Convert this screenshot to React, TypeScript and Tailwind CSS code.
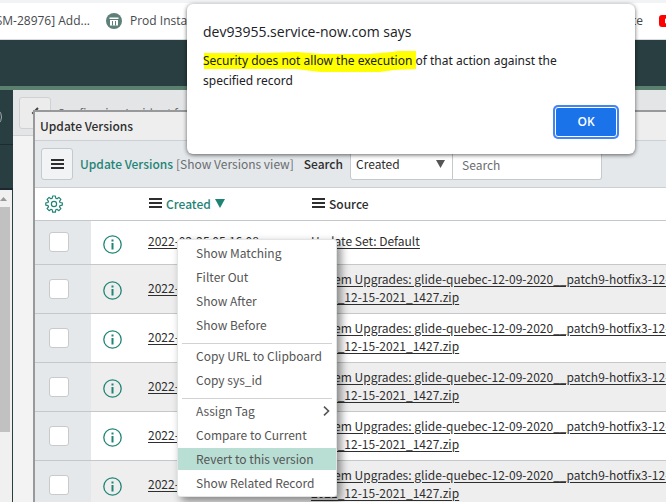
import { useState } from "react";

interface IVersion {
	created: string;
	source: string[];
}

const upgrade = [
	"System Upgrades: glide-quebec-12-09-2020__patch9-hotfix3-12-14-",
	"2021_12-15-2021_1427.zip",
];

const versions: IVersion[] = [
	{ created: "2022-02-25 05:16:08", source: ["Update Set: Default"] },
	{ created: "2022-01-25 04:12:31", source: upgrade },
	{ created: "2022-01-25 04:12:30", source: upgrade },
	{ created: "2022-01-25 04:12:29", source: upgrade },
	{ created: "2022-01-25 04:12:28", source: upgrade },
	{ created: "2022-01-25 04:12:27", source: upgrade },
];

const menuGroups = [
	["Show Matching", "Filter Out", "Show After", "Show Before"],
	["Copy URL to Clipboard", "Copy sys_id"],
	["Assign Tag", "Compare to Current", "Revert to this version", "Show Related Record"],
];

function BarsIcon() {
	return (
		<svg width="13" height="11" viewBox="0 0 13 11" fill="#2e2e2e" aria-hidden="true">
			<path d="M0 0h13v2H0zM0 4h13v2H0zM0 8h13v2H0z" />
		</svg>
	);
}

function GearIcon() {
	return (
		<svg width="18" height="18" viewBox="0 0 18 18" fill="none" stroke="#1f8476" strokeWidth="1.2" aria-hidden="true">
			<path
				strokeLinejoin="round"
				d="M7.6 1h2.8l.4 2.3 1.2.5 1.9-1.4 2 2-1.4 1.9.5 1.2 2.3.4v2.2l-2.3.5-.5 1.2 1.4 1.9-2 2-1.9-1.4-1.2.5-.4 2.3H7.6l-.4-2.3-1.2-.5-1.9 1.4-2-2 1.4-1.9-.5-1.2L.8 10.1V7.9L3 7.500l.5-1.2-1.4-1.9 2-2L6 3.8l1.2-.5z"
			/>
			<circle cx="9" cy="9" r="2.6" />
		</svg>
	);
}

function InfoIcon() {
	return (
		<svg width="19" height="19" viewBox="0 0 19 19" fill="none" aria-hidden="true">
			<circle cx="9.5" cy="9.5" r="8.7" stroke="#1f8476" strokeWidth="1.3" />
			<path d="M8.5 4.500h2v2h-2zM8.500 8h2v6.500h-2z" fill="#1f8476" />
		</svg>
	);
}

function BookmarksBar() {
	return (
		<nav className="flex h-10 items-center overflow-hidden whitespace-nowrap border-b border-t-[3px] border-b-[#d9dbde] border-t-[#f1f3f4] bg-white font-['Open_Sans',sans-serif] text-xs text-[#45484c]">
			<a href="#issue" className="flex w-[106px] shrink-0 justify-end pr-4">
				SM-28976] Add...
			</a>
			<a href="#prod" className="flex shrink-0 items-center gap-2">
				<svg width="16" height="16" viewBox="0 0 16 16" aria-hidden="true">
					<circle cx="8" cy="8" r="8" fill="#5f8078" />
					<path d="M3.500 4.500h9v1.500h-9zM4 7h8v5.500H4z" fill="#fff" />
					<path d="M6.500 8v4.500M9.500 8v4.500" stroke="#5f8078" />
				</svg>
				Prod Instance
			</a>
			<span className="grow" />
			<a href="#instance" className="shrink-0 pr-4">
				Instance
			</a>
			<a href="#video" aria-label="Video" className="w-[7px] shrink-0 overflow-hidden">
				<svg width="16" height="12" viewBox="0 0 16 12" aria-hidden="true">
					<rect width="16" height="12" rx="3" fill="#f00" />
					<path d="M6 3.500v5L11 6z" fill="#fff" />
				</svg>
			</a>
		</nav>
	);
}

function Sidebar() {
	return (
		<aside className="flex w-[13px] shrink-0 flex-col overflow-hidden bg-[#293e40]">
			<div className="flex h-[55px] items-center justify-end border-b border-[#1c2b2d] pr-[11px]">
				<span className="size-5 shrink-0 rounded-full border border-[#a5adae]" />
			</div>
			<div className="h-[45px] shrink-0 border-b-2 border-[#1c2830]" />
			<div className="mr-px flex grow flex-col bg-[#f0f0f0]">
				<svg width="10" height="17" viewBox="0 0 10 17" aria-hidden="true">
					<path d="M0 11l3.500-4 3.500 4z" fill="#999" />
				</svg>
				<div className="mr-0.5 h-[225px] bg-[#c1c1c1]" />
			</div>
		</aside>
	);
}

function VersionRow({ version, index }: { version: IVersion; index: number }) {
	return (
		<tr className="border-b border-[#c5c8ca] odd:bg-white even:bg-[#eee]">
			<td className="w-14 bg-[#e4e8eb] pl-3.5">
				<input
					type="checkbox"
					aria-label={`Select record ${index + 1}`}
					className="block size-5 appearance-none rounded-[3px] border border-[#c8cacc] bg-white checked:bg-[#1f8476]"
				/>
			</td>
			<td className="w-[57px] pl-3">
				<button type="button" aria-label="Preview record" className="mt-1 block">
					<InfoIcon />
				</button>
			</td>
			<td className="w-[163px] pb-0.5">
				<a href="#record" className="underline underline-offset-2">
					{version.created}
				</a>
			</td>
			<td className="h-11 pt-[5px] pb-[7px]">
				<a href="#source" className="underline underline-offset-2">
					{version.source.map((line) => (
						<span key={line} className="block underline">
							{line}
						</span>
					))}
				</a>
			</td>
		</tr>
	);
}

function VersionsDialog() {
	return (
		<section className="absolute inset-x-0 top-5 bottom-0 ml-5 overflow-hidden border-t-2 border-l-2 border-[#97999b] bg-white">
			<h2 className="flex h-7 items-center bg-[#eee] pl-[5px] font-medium">Update Versions</h2>
			<div className="flex h-12 items-center whitespace-nowrap border-y border-[#cbd0d4] bg-[#e4e8eb] pl-1.5">
				<button
					type="button"
					aria-label="List actions"
					className="flex size-8 shrink-0 items-center justify-center rounded-[3px] border border-[#c4c9cd] bg-[#f1f3f4]"
				>
					<BarsIcon />
				</button>
				<span className="ml-[7px] font-medium text-[#1f8476]">Update Versions</span>
				<span className="ml-[3px] text-[#6a6d70]">[Show Versions view]</span>
				<label htmlFor="field" className="ml-2.5 font-medium">
					Search
				</label>
				<div className="relative ml-[7px] shrink-0">
					<select
						id="field"
						className="block h-8 w-[103px] appearance-none rounded-l-[3px] border border-[#c4c9cd] bg-white pl-[5px]"
					>
						<option>Created</option>
						<option>Source</option>
					</select>
					<svg width="9" height="8" viewBox="0 0 9 8" className="pointer-events-none absolute right-2 top-3" aria-hidden="true">
						<path d="M0 0h9L4.500 8z" fill="#555" />
					</svg>
				</div>
				<input
					type="text"
					aria-label="Search text"
					placeholder="Search"
					className="h-8 w-[149px] rounded-r-[3px] border border-l-0 border-[#c4c9cd] bg-white pl-[9px] placeholder:text-[#6a6d70]"
				/>
			</div>
			<table className="w-full table-fixed border-collapse whitespace-nowrap text-left leading-[18px]">
				<thead>
					<tr className="h-8 border-b border-[#c5c8ca]">
						<th className="w-14 pl-2.5">
							<button type="button" aria-label="Personalize list" className="block">
								<GearIcon />
							</button>
						</th>
						<th className="w-[57px]" />
						<th className="w-[163px] pl-px font-medium text-[#1f8476]">
							<span className="flex items-center gap-1">
								<BarsIcon />
								Created
								<svg width="10" height="9" viewBox="0 0 10 9" aria-hidden="true">
									<path d="M0 0h10L5 9z" fill="#1f8476" />
								</svg>
							</span>
						</th>
						<th className="pl-px font-medium">
							<span className="flex items-center gap-1">
								<BarsIcon />
								Source
							</span>
						</th>
					</tr>
				</thead>
				<tbody>
					{versions.map((version, index) => (
						<VersionRow key={index} version={version} index={index} />
					))}
				</tbody>
			</table>
		</section>
	);
}

function ContextMenu() {
	const [active, setActive] = useState("Revert to this version");

	return (
		<div className="absolute left-[177px] top-[239px] w-40 rounded-[3px] border border-[#e2e4e5] bg-white py-0.5 text-[#555] shadow-[4px_4px_8px_rgba(0,0,0,0.45)]">
			{menuGroups.map((group, index) => (
				<div key={index}>
					{index > 0 && <hr className="mx-1 mt-[7px] mb-px border-[#d0d2d3]" />}
					<div className="flex flex-col gap-0.5">
						{group.map((item) => (
							<button
								key={item}
								type="button"
								onMouseEnter={() => setActive(item)}
								className={`flex h-[22px] w-full items-center justify-between pl-[18px] pr-1.5 ${
									active === item ? "bg-[#b9dfd5]" : ""
								}`}
							>
								{item}
								{item === "Assign Tag" && (
									<svg width="7" height="10" viewBox="0 0 7 10" fill="none" stroke="#555" strokeWidth="1.600" aria-hidden="true">
										<path d="M1 .7L5.500 5 1 9.300" />
									</svg>
								)}
							</button>
						))}
					</div>
				</div>
			))}
		</div>
	);
}

function AlertDialog() {
	return (
		<div
			role="alertdialog"
			aria-labelledby="alert-title"
			className="absolute left-[187px] top-1 flex w-[448px] flex-col rounded-md bg-white px-4 pt-[18px] pb-[17px] font-['Open_Sans',sans-serif] text-[#202124] shadow-[0_1px_4px_rgba(0,0,0,0.6)]"
		>
			<h1 id="alert-title" className="text-[14px] leading-5">
				dev93955.service-now.com says
			</h1>
			<p className="relative mt-[9px] font-['Noto_Sans',sans-serif] text-[12px] leading-5">
				<svg width="213" height="21" viewBox="0 0 213 21" className="absolute left-0 top-0" aria-hidden="true">
					<path d="M1 2h62l31-1 25 2h46l24-2 6-1h18v18l-22 1-14 2h-60l-24-3H1z" fill="#ff0" />
				</svg>
				<span className="relative">
					Security does not allow the execution of that action against the
					<br />
					specified record
				</span>
			</p>
			<button
				type="button"
				className="mt-4 mr-0.5 h-[30px] w-[62px] self-end rounded-[3px] border border-white bg-[#1a73e8] text-xs font-semibold text-white ring-2 ring-[#4285f4]"
			>
				OK
			</button>
		</div>
	);
}

export default function App() {
	return (
		<div className="relative flex h-screen flex-col overflow-hidden bg-[#f3f3f3] font-['Noto_Sans_CJK_JP',sans-serif] text-[12px] leading-[18px] text-[#2e2e2e]">
			<BookmarksBar />
			<header className="h-[50px] shrink-0 border-b-4 border-[#5b806f] bg-[#293e40]" />
			<div className="flex min-h-0 grow">
				<Sidebar />
				<main className="relative min-w-0 grow">
					<div className="flex h-[46px] items-center gap-1.5 border-b border-[#cfd1d3] bg-[#e4e5e7] pl-1.5 text-[#6a6d70]">
						<button
							type="button"
							aria-label="Back"
							className="flex size-8 items-center justify-center rounded-[3px] border border-[#cfd1d3] bg-[#ececed]"
						>
							<svg width="8" height="12" viewBox="0 0 8 12" fill="none" stroke="#444" strokeWidth="2" aria-hidden="true">
								<path d="M7 1L2 6l5 5" />
							</svg>
						</button>
						<span>Configuring Incident form</span>
					</div>
					<VersionsDialog />
				</main>
			</div>
			<ContextMenu />
			<AlertDialog />
		</div>
	);
}
